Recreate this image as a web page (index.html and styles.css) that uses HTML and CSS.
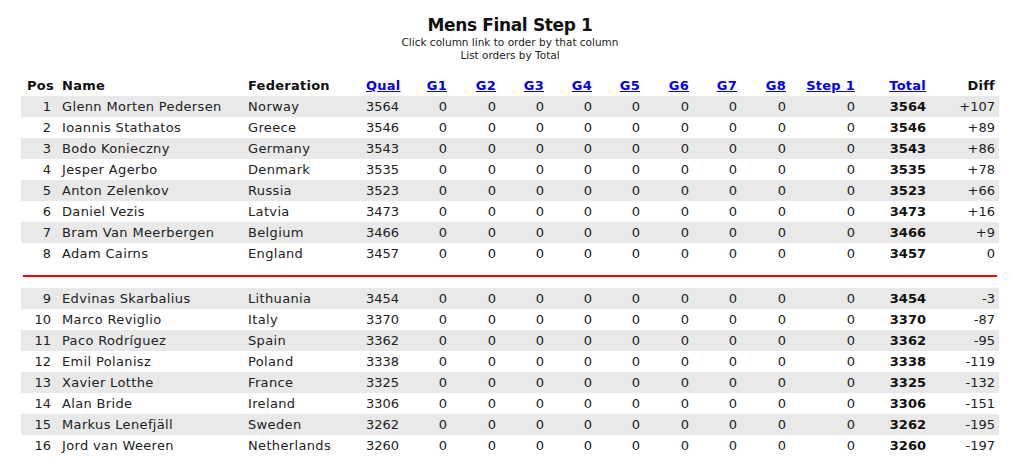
FILE: index.html
```html
<!DOCTYPE html>
<html>
<head>
<meta charset="utf-8">
<link rel="stylesheet" href="styles.css">
</head>
<body>
<div class="head">
  <h1 class="title">Mens Final Step 1</h1>
  <div class="sub">Click column link to order by that column</div>
  <div class="sub">List orders by Total</div>
</div>
<table class="res">
  <colgroup>
    <col class="c-pos"><col class="c-name"><col class="c-fed"><col class="c-qual">
    <col class="c-g1"><col class="c-g2"><col class="c-g"><col class="c-g"><col class="c-g"><col class="c-g2"><col class="c-g"><col class="c-g2">
    <col class="c-step"><col class="c-total"><col class="c-diff">
  </colgroup>
  <thead>
    <tr>
      <th class="r">Pos</th><th class="l">Name</th><th class="l">Federation</th>
      <th class="l"><a href="#">Qual</a></th>
      <th><a href="#">G1</a></th><th><a href="#">G2</a></th><th><a href="#">G3</a></th><th><a href="#">G4</a></th>
      <th><a href="#">G5</a></th><th><a href="#">G6</a></th><th><a href="#">G7</a></th><th><a href="#">G8</a></th>
      <th><a href="#">Step 1</a></th><th><a href="#">Total</a></th><th>Diff</th>
    </tr>
  </thead>
  <tbody>
    <tr class="odd"><td>1</td><td class="l t">Glenn Morten Pedersen</td><td class="l t">Norway</td><td class="l">3564</td><td>0</td><td>0</td><td>0</td><td>0</td><td>0</td><td>0</td><td>0</td><td>0</td><td>0</td><td class="b">3564</td><td>+107</td></tr>
    <tr><td>2</td><td class="l t">Ioannis Stathatos</td><td class="l t">Greece</td><td class="l">3546</td><td>0</td><td>0</td><td>0</td><td>0</td><td>0</td><td>0</td><td>0</td><td>0</td><td>0</td><td class="b">3546</td><td>+89</td></tr>
    <tr class="odd"><td>3</td><td class="l t">Bodo Konieczny</td><td class="l t">Germany</td><td class="l">3543</td><td>0</td><td>0</td><td>0</td><td>0</td><td>0</td><td>0</td><td>0</td><td>0</td><td>0</td><td class="b">3543</td><td>+86</td></tr>
    <tr><td>4</td><td class="l t">Jesper Agerbo</td><td class="l t">Denmark</td><td class="l">3535</td><td>0</td><td>0</td><td>0</td><td>0</td><td>0</td><td>0</td><td>0</td><td>0</td><td>0</td><td class="b">3535</td><td>+78</td></tr>
    <tr class="odd"><td>5</td><td class="l t">Anton Zelenkov</td><td class="l t">Russia</td><td class="l">3523</td><td>0</td><td>0</td><td>0</td><td>0</td><td>0</td><td>0</td><td>0</td><td>0</td><td>0</td><td class="b">3523</td><td>+66</td></tr>
    <tr><td>6</td><td class="l t">Daniel Vezis</td><td class="l t">Latvia</td><td class="l">3473</td><td>0</td><td>0</td><td>0</td><td>0</td><td>0</td><td>0</td><td>0</td><td>0</td><td>0</td><td class="b">3473</td><td>+16</td></tr>
    <tr class="odd"><td>7</td><td class="l t">Bram Van Meerbergen</td><td class="l t">Belgium</td><td class="l">3466</td><td>0</td><td>0</td><td>0</td><td>0</td><td>0</td><td>0</td><td>0</td><td>0</td><td>0</td><td class="b">3466</td><td>+9</td></tr>
    <tr><td>8</td><td class="l t">Adam Cairns</td><td class="l t">England</td><td class="l">3457</td><td>0</td><td>0</td><td>0</td><td>0</td><td>0</td><td>0</td><td>0</td><td>0</td><td>0</td><td class="b">3457</td><td>0</td></tr>
    <tr class="sep"><td colspan="15"><div class="line"></div></td></tr>
    <tr class="odd"><td>9</td><td class="l t">Edvinas Skarbalius</td><td class="l t">Lithuania</td><td class="l">3454</td><td>0</td><td>0</td><td>0</td><td>0</td><td>0</td><td>0</td><td>0</td><td>0</td><td>0</td><td class="b">3454</td><td>-3</td></tr>
    <tr><td>10</td><td class="l t">Marco Reviglio</td><td class="l t">Italy</td><td class="l">3370</td><td>0</td><td>0</td><td>0</td><td>0</td><td>0</td><td>0</td><td>0</td><td>0</td><td>0</td><td class="b">3370</td><td>-87</td></tr>
    <tr class="odd"><td>11</td><td class="l t">Paco Rodríguez</td><td class="l t">Spain</td><td class="l">3362</td><td>0</td><td>0</td><td>0</td><td>0</td><td>0</td><td>0</td><td>0</td><td>0</td><td>0</td><td class="b">3362</td><td>-95</td></tr>
    <tr><td>12</td><td class="l t">Emil Polanisz</td><td class="l t">Poland</td><td class="l">3338</td><td>0</td><td>0</td><td>0</td><td>0</td><td>0</td><td>0</td><td>0</td><td>0</td><td>0</td><td class="b">3338</td><td>-119</td></tr>
    <tr class="odd"><td>13</td><td class="l t">Xavier Lotthe</td><td class="l t">France</td><td class="l">3325</td><td>0</td><td>0</td><td>0</td><td>0</td><td>0</td><td>0</td><td>0</td><td>0</td><td>0</td><td class="b">3325</td><td>-132</td></tr>
    <tr><td>14</td><td class="l t">Alan Bride</td><td class="l t">Ireland</td><td class="l">3306</td><td>0</td><td>0</td><td>0</td><td>0</td><td>0</td><td>0</td><td>0</td><td>0</td><td>0</td><td class="b">3306</td><td>-151</td></tr>
    <tr class="odd"><td>15</td><td class="l t">Markus Lenefjäll</td><td class="l t">Sweden</td><td class="l">3262</td><td>0</td><td>0</td><td>0</td><td>0</td><td>0</td><td>0</td><td>0</td><td>0</td><td>0</td><td class="b">3262</td><td>-195</td></tr>
    <tr><td>16</td><td class="l t">Jord van Weeren</td><td class="l t">Netherlands</td><td class="l">3260</td><td>0</td><td>0</td><td>0</td><td>0</td><td>0</td><td>0</td><td>0</td><td>0</td><td>0</td><td class="b">3260</td><td>-197</td></tr>
  </tbody>
</table>
</body>
</html>
```
FILE: styles.css
```css
html, body {
  margin: 0;
  padding: 0;
  background: #fff;
}
body {
  font-family: "DejaVu Sans", Verdana, sans-serif;
  color: #222;
  font-size: 13px;
}
.head {
  text-align: center;
  padding-top: 14px;
  margin-left: -4px;
}
.title {
  margin: 0;
  font-size: 17px;
  letter-spacing: -0.35px;
  line-height: 22px;
  font-weight: bold;
  color: #111;
}
.sub {
  font-size: 10.5px;
  line-height: 13px;
}
.res {
  margin: 13px 0 0 21px;
  width: 978px;
  border-collapse: collapse;
  table-layout: fixed;
}
.c-pos { width: 35px; }
.c-name { width: 186px; }
.c-fed { width: 118px; }
.c-qual { width: 45px; }
.c-g1 { width: 47px; }
.c-g2 { width: 49px; }
.c-g { width: 48px; }
.c-step { width: 69px; }
.c-total { width: 71px; }
.c-diff { width: 68px; }
th, td {
  padding: 0 5px 0 6px;
  height: 21px;
  text-align: right;
  white-space: nowrap;
}
th {
  font-weight: bold;
  color: #111;
  letter-spacing: 0.25px;
}
th.l, td.l { text-align: left; }
th.r { text-align: right; }
td.t { letter-spacing: 0.35px; }
th:last-child, td:last-child { padding-right: 4px; }
th a {
  color: #0000ee;
  text-decoration: underline;
}
td.b { font-weight: bold; color: #111; }
tr.odd td { background: #e9e9e9; }
tr.sep td {
  height: 24px;
  padding: 0 2px;
}
.line {
  height: 2px;
  background: #f00;
}
```
